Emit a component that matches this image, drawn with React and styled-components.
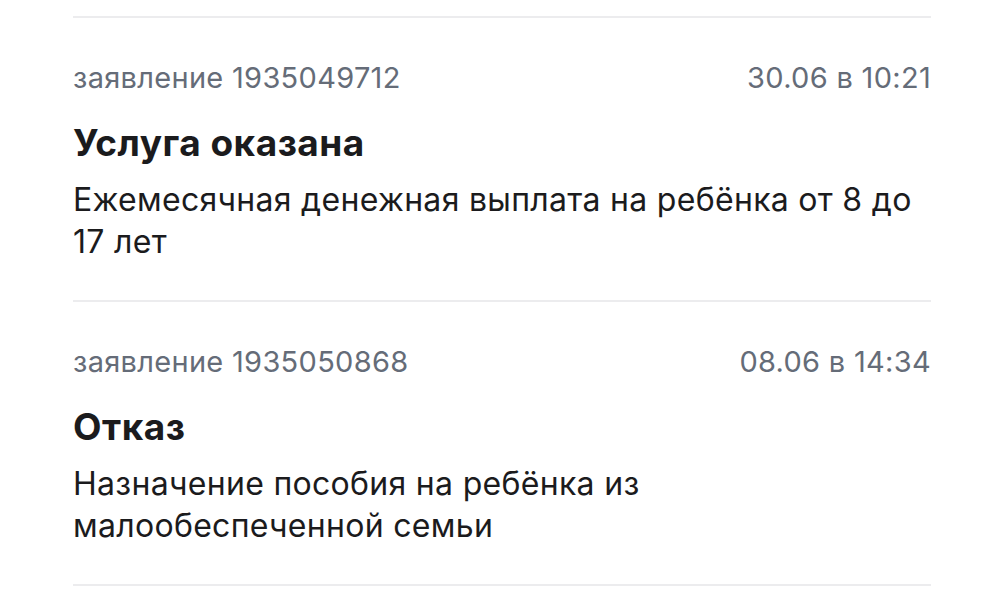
import React from "react";
import styled, { createGlobalStyle } from "styled-components";

const Global = createGlobalStyle`
  html, body { margin: 0; padding: 0; background: #ffffff; }
  body { font-family: Inter, "Noto Sans", "Liberation Sans", sans-serif; -webkit-font-smoothing: antialiased; }
`;

const Page = styled.div`
  padding: 16px 72px 0 73px;
`;

const List = styled.div`
  border-top: 2px solid #ececee;
`;

const Item = styled.div`
  padding: 43px 0 37px;
  border-bottom: 2px solid #ececee;
`;

const Meta = styled.div`
  display: flex;
  justify-content: space-between;
  align-items: baseline;
  font-size: 29px;
  line-height: 34px;
  letter-spacing: 0.3px;
  color: #656c78;
`;

const Title = styled.div`
  margin-top: 25px;
  font-size: 37px;
  line-height: 46px;
  font-weight: 700;
  letter-spacing: 0.5px;
  color: #1b1b1d;
`;

const Desc = styled.div`
  margin-top: 13px;
  font-size: 32px;
  line-height: 42px;
  letter-spacing: 0.3px;
  color: #1b1b1d;
`;

const items = [
  {
    num: "заявление 1935049712",
    date: "30.06 в 10:21",
    title: "Услуга оказана",
    desc: "Ежемесячная денежная выплата на ребёнка от 8 до 17 лет",
  },
  {
    num: "заявление 1935050868",
    date: "08.06 в 14:34",
    title: "Отказ",
    desc: "Назначение пособия на ребёнка из малообеспеченной семьи",
  },
];

export default function App() {
  return (
    <Page>
      <Global />
      <List>
        {items.map((it) => (
          <Item key={it.num}>
            <Meta>
              <span>{it.num}</span>
              <span>{it.date}</span>
            </Meta>
            <Title>{it.title}</Title>
            <Desc>{it.desc}</Desc>
          </Item>
        ))}
      </List>
    </Page>
  );
}
